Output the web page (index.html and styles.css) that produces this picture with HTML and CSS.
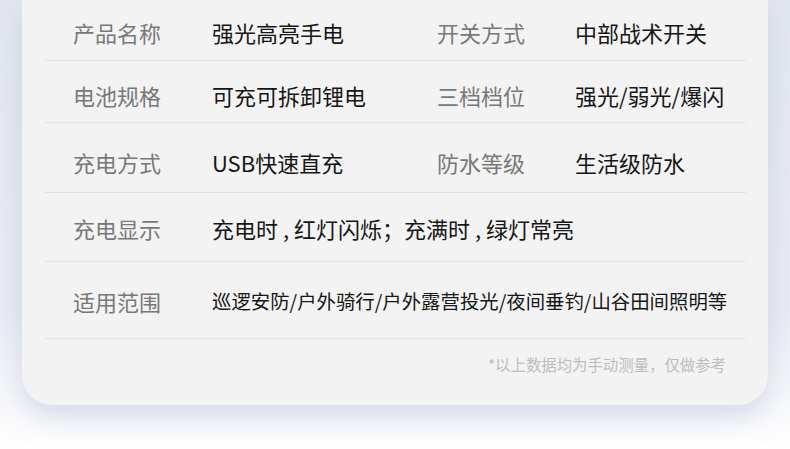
FILE: index.html
```html
<!DOCTYPE html>
<html lang="zh-CN">
<head>
    <meta charset="UTF-8">
    <meta name="viewport" content="width=device-width, initial-scale=1.0">
    <title>产品参数</title>
    <link rel="stylesheet" href="styles.css">
</head>
<body>

<div class="page">
    <div class="spec-card">
        <div class="spec-row row-1">
            <span class="label">产品名称</span>
            <span class="value">强光高亮手电</span>
            <span class="label">开关方式</span>
            <span class="value">中部战术开关</span>
        </div>
        <div class="spec-row row-2">
            <span class="label">电池规格</span>
            <span class="value">可充可拆卸锂电</span>
            <span class="label">三档档位</span>
            <span class="value">强光/弱光/爆闪</span>
        </div>
        <div class="spec-row row-3">
            <span class="label">充电方式</span>
            <span class="value">USB快速直充</span>
            <span class="label">防水等级</span>
            <span class="value">生活级防水</span>
        </div>
        <div class="spec-row row-4">
            <span class="label">充电显示</span>
            <span class="value wide">充电时 , 红灯闪烁；充满时 , 绿灯常亮</span>
        </div>
        <div class="spec-row row-5">
            <span class="label">适用范围</span>
            <span class="value wide small">巡逻安防/户外骑行/户外露营投光/夜间垂钓/山谷田间照明等</span>
        </div>
        <p class="note">*以上数据均为手动测量，仅做参考</p>
    </div>
</div>

</body>
</html>
```

FILE: styles.css
```css
body {
    margin: 0;
    background: linear-gradient(#e3e7f0 0%, #e9ecf4 70%, #ffffff 100%);
    font-family: "Noto Sans CJK SC", "Noto Sans", sans-serif;
}

.page {
    padding: 0 22px 45px;
}

.spec-card {
    background: #f3f3f3;
    border-radius: 0 0 30px 30px;
    padding: 0 22px 0 23px;
    box-shadow: 0 12px 26px rgba(180, 190, 215, 0.5);
}

.spec-row {
    display: grid;
    grid-template-columns: 139px 225px 138px 1fr;
    padding-left: 28px;
    border-bottom: 1px solid #e2e2e2;
    font-size: 22px;
    line-height: 22px;
}
.row-1 { padding-top: 21px; padding-bottom: 17px; }
.row-2 { padding-top: 23px; padding-bottom: 16px; }
.row-3 { padding-top: 28px; padding-bottom: 19px; }
.row-4 { padding-top: 24px; padding-bottom: 22px; }
.row-5 { padding-top: 28px; padding-bottom: 26px; }

.label {
    color: #787878;
}
.value {
    color: #161616;
    white-space: nowrap;
}
.value.wide {
    grid-column: 2 / 5;
}
.value.small {
    font-size: 19.4px;
}

.note {
    margin: 0;
    padding: 17px 20px 33px 0;
    text-align: right;
    font-size: 15.4px;
    line-height: 16px;
    color: #bdbdbd;
}
```
